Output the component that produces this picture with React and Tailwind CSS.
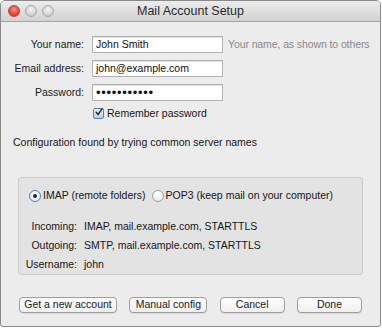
import React from 'react';

const font = { fontFamily: '"Liberation Sans", Arial, sans-serif' };

// --- SMALL PIECES ---
function TrafficLight({ color }) {
    const styles = {
        red: 'bg-[radial-gradient(circle_at_50%_35%,#ff8f86,#e2463c_60%,#b8322a)] border-[#b5473f]',
        gray: 'bg-[radial-gradient(circle_at_50%_35%,#f4f4f4,#d4d4d4_60%,#bdbdbd)] border-[#a9a9a9]',
    };
    return <span className={`block w-3 h-3 rounded-full border ${styles[color]}`} />;
}

function Field({ label, value, hint }) {
    return (
        <div className="flex items-center h-[17px]">
            <span className="w-[83px] text-right text-[#1b1b1b]">{label}</span>
            <div className="ml-[8px] w-[131px] h-[17px] bg-white border border-[#b1b1b1] shadow-[inset_0_1px_0_#e2e2e2] flex items-center px-[3px] text-[#111]">
                {value}
            </div>
            {hint && <span className="ml-[5px] text-[#8a8a8a] whitespace-nowrap tracking-[-0.1px]">{hint}</span>}
        </div>
    );
}

function Radio({ checked, label }) {
    return (
        <label className="flex items-center gap-[2px]">
            <span className={`w-[12px] h-[12px] rounded-full border flex items-center justify-center ${checked ? 'border-[#5a7fb0] bg-[radial-gradient(circle_at_50%_30%,#ffffff,#d6e5f5)]' : 'border-[#9c9c9c] bg-[linear-gradient(#ffffff,#ececec)]'}`}>
                {checked && <span className="w-[4px] h-[4px] rounded-full bg-[#1d2a3a]" />}
            </span>
            <span>{label}</span>
        </label>
    );
}

function Button({ children, width }) {
    return (
        <button className={`${width} h-[16px] rounded-[4px] border border-[#9d9d9d] bg-[linear-gradient(#ffffff,#efefef)] shadow-[0_1px_0_#d9d9d9] text-[#1b1b1b] leading-none`}>
            {children}
        </button>
    );
}

const serverRows = [
    { label: 'Incoming:', value: 'IMAP, mail.example.com, STARTTLS' },
    { label: 'Outgoing:', value: 'SMTP, mail.example.com, STARTTLS' },
    { label: 'Username:', value: 'john' },
];

// --- MAIN ---
export default function App() {
    return (
        <div style={font} className="w-[382px] h-[328px] bg-white text-[10.5px] leading-none text-[#161616]">
            <div className="w-[381px] h-[327px] flex flex-col border border-[#8a8a8a] rounded-t-[5px] rounded-b-[3px] overflow-hidden bg-[#ececec]">
                {/* title bar */}
                <div className="relative h-[21px] shrink-0 flex items-center bg-[linear-gradient(#ececec,#d2d2d2)] border-b border-[#a6a6a6]">
                    <div className="flex items-center gap-[5px] pl-[7px]">
                        <TrafficLight color="red" />
                        <TrafficLight color="gray" />
                        <TrafficLight color="gray" />
                    </div>
                    <span className="absolute inset-0 flex items-center justify-center text-[12.5px] text-[#2a2a2a]">Mail Account Setup</span>
                </div>

                {/* body */}
                <div className="flex-1 flex flex-col pt-[14px]">
                    <div className="flex flex-col gap-[7px]">
                        <Field label="Your name:" value="John Smith" hint="Your name, as shown to others" />
                        <Field label="Email address:" value="john@example.com" />
                        <Field label="Password:" value={<span className="tracking-[0.7px] text-[13px]">•••••••••••</span>} />
                    </div>

                    <label className="flex items-center ml-[92px] mt-[6px] h-[12px]">
                        <span className="w-[11px] h-[11px] rounded-[2px] border border-[#5f7fa8] bg-[linear-gradient(#e9f1fb,#b9d0ea)] flex items-center justify-center">
                            <svg width="10" height="10" viewBox="0 0 10 10" className="-mt-[2px] ml-[1px]">
                                <path d="M1.5 5.2 L4 8 L9 0.8" fill="none" stroke="#1c2636" strokeWidth="1.8" strokeLinecap="round" strokeLinejoin="round" />
                            </svg>
                        </span>
                        <span className="ml-[3px]">Remember password</span>
                    </label>

                    <p className="ml-[12px] mt-[18px]">Configuration found by trying common server names</p>

                    <div className="mx-[17px] mt-[29px] h-[98px] rounded-[3px] border border-[#cbcbcb] bg-[#e3e3e3] flex flex-col pt-[12px]">
                        <div className="flex items-center gap-[6px] pl-[10px]">
                            <Radio checked label="IMAP (remote folders)" />
                            <Radio label="POP3 (keep mail on your computer)" />
                        </div>
                        <div className="flex flex-col gap-[8px] mt-[19px]">
                            {serverRows.map((row) => (
                                <div key={row.label} className="flex h-[11px] items-center">
                                    <span className="w-[58px] text-right">{row.label}</span>
                                    <span className="ml-[7px]">{row.value}</span>
                                </div>
                            ))}
                        </div>
                    </div>

                    <div className="flex justify-between mx-[18px] mt-[22px]">
                        <Button width="w-[98px]">Get a new account</Button>
                        <Button width="w-[78px]">Manual config</Button>
                        <Button width="w-[65px]">Cancel</Button>
                        <Button width="w-[65px]">Done</Button>
                    </div>
                </div>
            </div>
        </div>
    );
}
